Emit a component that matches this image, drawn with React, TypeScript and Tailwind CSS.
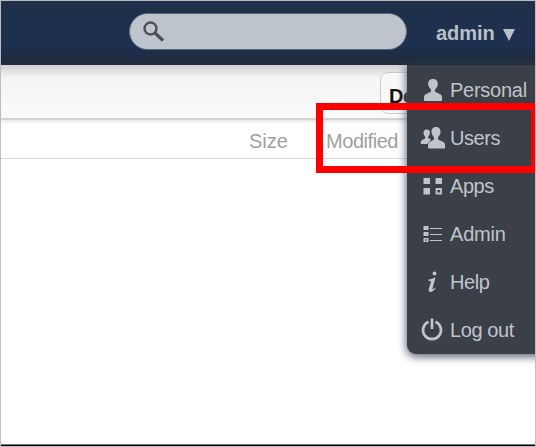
import type { ReactNode } from "react";

const iconClass = "block h-6 w-6 shrink-0 overflow-visible";

const PersonIcon = () => (
  <svg className={iconClass} viewBox="0 0 24 24" fill="currentColor">
    <path d="M12 1c-3.400 0-5 2.200-4.800 5 .1 2.300 1.200 4.200 2.700 5.200v2.600l-4.700 2.200c-1.400.7-2.100 1.800-2.200 3.500v2.600c0 .7.400 1 1 1h16c.6 0 1-.3 1-1v-2.600c-.1-1.700-.8-2.800-2.200-3.500l-4.700-2.200v-2.600c1.500-1 2.600-2.900 2.700-5.200.2-2.800-1.400-5-4.800-5z" />
  </svg>
);

const UsersIcon = () => (
  <svg className={iconClass} viewBox="0 0 24 24" fill="currentColor">
    <path d="M5.700 3.500c-2.200 0-3.300 1.500-3.200 3.500.1 1.500.8 2.700 1.600 3.400v2l-3 1.500C.2 14.400-.2 15.100-.2 16.300v1.200c0 .4.300.6.700.6h5.700l3.300-3.600V13l-2.200-.8v-1.800c.8-.7 1.500-1.900 1.600-3.400.1-2-1-3.500-3.200-3.500z" />
    <path d="M15 1c-3.200 0-4.700 2.200-4.500 5 .1 2.200 1.200 4 2.400 5v2.600l-3.800 2.100c-1.300.7-1.900 1.600-2 3.200v2.700c0 .6.400 1 1 1h15c.6 0 1-.4 1-1v-2.700c-.1-1.600-.9-2.500-2.200-3.200l-4.800-2.100V11c1.200-1 2.300-2.800 2.400-5 .2-2.800-1.300-5-4.500-5z" />
  </svg>
);

const AppsIcon = () => (
  <svg className={iconClass} viewBox="0 0 24 24" fill="currentColor">
    <path d="M2.500 4h6.500v6H2.500zM14.500 4H21v6h-6.500zM2.500 14h6.500v6.500H2.500z" />
    <path d="M15.500 15h4.500v4.500h-4.500z" fill="none" stroke="currentColor" strokeWidth="1.800" />
  </svg>
);

const AdminIcon = () => (
  <svg className={iconClass} viewBox="0 0 24 24" fill="currentColor">
    <path d="M2.500 4h5v4h-5zM2.500 10h5v4h-5zM9 6h12v1H9zM9 12h12v1H9zM9 18h12v1H9z" />
    <path d="M3.250 16.750h3.500v2.500h-3.500z" fill="none" stroke="currentColor" strokeWidth="1.500" />
  </svg>
);

const HelpIcon = () => (
  <svg className={iconClass} viewBox="0 0 24 24" fill="currentColor">
    <circle cx="13.500" cy="3.500" r="2" />
    <path d="M7.500 9.500c2.300-.2 4.300-.8 6.300-1.900l.6.400-2.900 10.400c-.2.800.1 1 .5.800.6-.3 1.200-.9 1.900-1.700l.7.500c-1.700 2.700-3.300 4-5.200 4-1.600 0-2.100-1.200-1.600-3l2-6.800c.3-1-.1-1.300-2.300-1.500z" />
  </svg>
);

const PowerIcon = () => (
  <svg className={iconClass} viewBox="0 0 24 24" fill="none" stroke="currentColor" strokeWidth="2.700">
    <path d="M7.500 3.800a9 9 0 1 0 7 0M11 .5v10.500" />
  </svg>
);

const entries: { label: string; icon: ReactNode; spacing: string }[] = [
  { label: "Personal", icon: <PersonIcon />, spacing: "tracking-[-0.25px]" },
  { label: "Users", icon: <UsersIcon />, spacing: "tracking-[-0.45px]" },
  { label: "Apps", icon: <AppsIcon />, spacing: "tracking-[-0.45px]" },
  { label: "Admin", icon: <AdminIcon />, spacing: "tracking-[-0.2px]" },
  { label: "Help", icon: <HelpIcon />, spacing: "tracking-[-0.4px]" },
  { label: "Log out", icon: <PowerIcon />, spacing: "tracking-[-0.4px]" },
];

export default function App() {
  return (
    <div className="relative h-[447px] w-[536px] overflow-hidden border border-[#bdbdbd] bg-white font-['Liberation_Sans',Arial,sans-serif]">
      <header className="flex h-16 items-start bg-linear-to-b from-[#20304a] via-[#1d304f] via-70% to-[#202a3b] pl-32">
        <div className="mt-3 flex h-[37px] w-[278px] items-center rounded-full border border-[#59677a] bg-[#bdc4cc] pl-[13px]">
          <svg className="block h-[21px] w-[22px]" viewBox="0 0 22 21" fill="none" stroke="#4b4e55">
            <circle cx="7.500" cy="7.500" r="6" strokeWidth="2.400" />
            <path d="m12 12 8 7.500" strokeWidth="3.200" />
          </svg>
        </div>
        <button className="ml-[29px] mt-[18px] flex h-7 items-center text-[20px] font-bold text-[#b9c0c8]">
          <span className="w-[60px] text-left tracking-[-0.05px]">admin</span>
          <svg className="ml-[7px] mt-[3px] block h-3 w-3" viewBox="0 0 12 12" fill="currentColor">
            <path d="M0 0h12L6 12z" />
          </svg>
        </button>
      </header>

      <section className="flex h-[55px] justify-end border-b-2 border-[#d1d1d1] bg-linear-to-b from-[#d0d0d0] via-[#f5f5f5] via-25% to-[#fafafa] shadow-[0_1px_4px_#ddd]">
        <div className="mt-[7px] h-[42px] w-[155px] rounded-lg border border-[#ccc] bg-[#f8f8f8] pl-[8px] pt-[11px] text-[20px] font-bold leading-6 tracking-[-0.5px] text-[#111]">
          De
        </div>
      </section>
      <div className="flex h-[39px] items-center border-b border-[#dadada] pl-[248px] pt-[3px] text-[20px] text-[#a0a0a0]">
        <span className="w-[77px]">Size</span>
        <span className="tracking-[-0.45px]">Modified</span>
      </div>

      <nav className="absolute left-[406px] top-16 h-[289px] w-[140px] rounded-bl-[9px] bg-[#3a3f48] text-[#c0c4c9] shadow-[0_2px_9px_1px_#62677a]">
        {entries.map((entry) => (
          <a key={entry.label} className="flex h-12 items-center gap-[5px] pl-[14px] pt-[2px] text-[20px]">
            {entry.icon}
            <span className={entry.spacing}>{entry.label}</span>
          </a>
        ))}
      </nav>
      <div className="absolute inset-x-0 top-14 h-2 bg-linear-to-b from-transparent to-[#202a3b]" />

      <div className="absolute left-[315px] top-[102px] h-[70px] w-[219px] border-[7px] border-r-4 border-[#ff0000]" />
      <div className="absolute inset-x-0 bottom-0 h-0.5 border-t border-[#777] bg-black" />
    </div>
  );
}
